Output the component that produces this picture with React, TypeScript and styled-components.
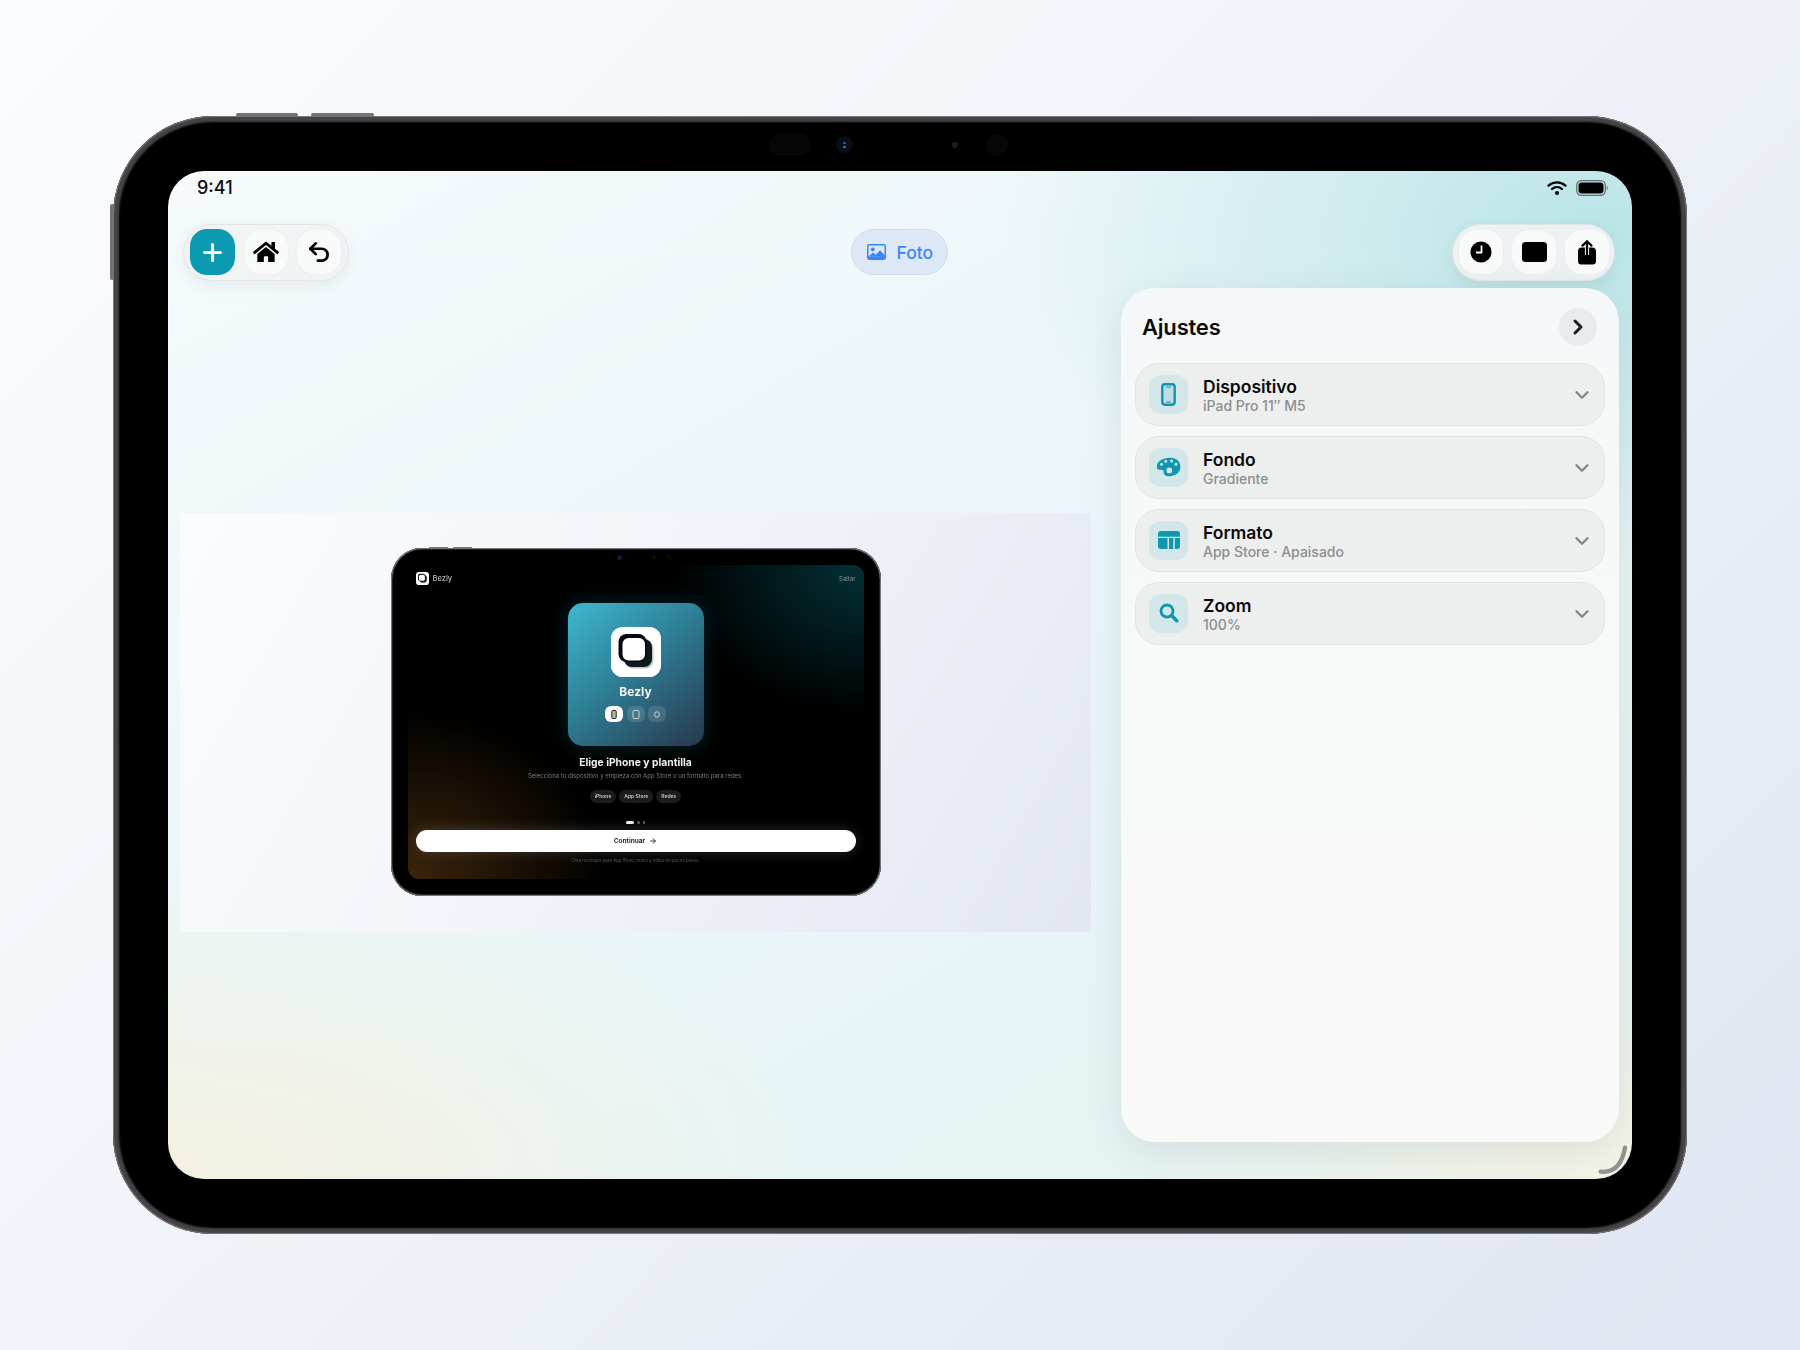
import React from "react";
import styled, { createGlobalStyle } from "styled-components";
import { FaHome } from "react-icons/fa";
import { Undo2, Plus, ChevronRight, ChevronDown, ArrowRight } from "lucide-react";

const Global = createGlobalStyle`
  html, body { margin: 0; padding: 0; }
  body { font-family: Inter, "Liberation Sans", sans-serif; background: #eef1f7; }
`;

const Page = styled.div`
  width: 1800px;
  height: 1350px;
  display: flex;
  align-items: center;
  justify-content: center;
  padding-bottom: 1px;
  box-sizing: border-box;
  background: linear-gradient(135deg, #fbfcfe 0%, #f0f3f8 45%, #dfe5f1 100%);
`;

const Device = styled.div`
  position: relative;
  box-sizing: border-box;
  width: 1574px;
  height: 1118px;
  padding: 55px;
  border-radius: 100px;
  background: #000;
  box-shadow: inset 0 0 0 1px #7a787b, inset 0 0 2px 6px #454346;
`;

const SideKey = styled.div<{ $left: number; $top: number; $w: number; $h: number }>`
  position: absolute;
  left: ${(p) => p.$left}px;
  top: ${(p) => p.$top}px;
  width: ${(p) => p.$w}px;
  height: ${(p) => p.$h}px;
  background: #747276;
  border-radius: 2px;
`;

const Sensor = styled.div<{ $left: number; $w: number; $h: number; $c: string }>`
  position: absolute;
  left: ${(p) => p.$left}px;
  top: ${(p) => 29 - p.$h / 2}px;
  width: ${(p) => p.$w}px;
  height: ${(p) => p.$h}px;
  background: ${(p) => p.$c};
  border-radius: ${(p) => p.$h / 2}px;
`;

const LensDot = styled.div`
  position: absolute;
  left: 730px;
  top: 26px;
  width: 3px;
  height: 7px;
  border-radius: 2px;
  background: repeating-linear-gradient(180deg, #2a62c9 0 2.5px, #0b1020 2.5px 4px);
`;

const Screen = styled.div`
  position: relative;
  width: 1464px;
  height: 1008px;
  border-radius: 36px;
  overflow: hidden;
  display: flex;
  flex-direction: column;
  background:
    radial-gradient(ellipse 600px 340px at 98% 6%, rgba(178, 225, 228, 0.85), rgba(178, 225, 228, 0) 100%),
    radial-gradient(ellipse 640px 300px at 0% 100%, rgba(246, 240, 222, 0.9), rgba(246, 240, 222, 0) 100%),
    radial-gradient(ellipse 520px 260px at 100% 100%, rgba(247, 244, 228, 0.9), rgba(247, 244, 228, 0) 100%),
    linear-gradient(150deg, #f6fafd 0%, #ebf6f8 38%, #e4f3f3 100%);
`;

const StatusBar = styled.div`
  height: 53px;
  flex: none;
  display: flex;
  align-items: flex-start;
  justify-content: space-between;
  padding: 6px 24px 0 29px;
  box-sizing: border-box;
`;

const Time = styled.span`
  font-size: 18px;
  line-height: 22px;
  font-weight: 500;
  color: #0c0c0c;
`;

const StatusIcons = styled.div`
  display: flex;
  align-items: center;
  gap: 9px;
  height: 22px;
`;

const TopBar = styled.div`
  flex: none;
  display: grid;
  grid-template-columns: 1fr auto 1fr;
  align-items: center;
  height: 57px;
  padding: 0 17px 0 15px;
`;

const ToolGroup = styled.div<{ $end?: boolean }>`
  justify-self: ${(p) => (p.$end ? "end" : "start")};
  display: flex;
  align-items: center;
  box-sizing: border-box;
  height: 57px;
  padding: 0 ${(p) => (p.$end ? 5 : 7)}px 0 6px;
  gap: 9px;
  border-radius: 29px;
  background: rgba(240, 242, 243, 0.92);
  border: 1px solid #e1e5e6;
  box-shadow: 0 5px 16px rgba(30, 50, 60, 0.07);
`;

const ToolButton = styled.button<{ $primary?: boolean }>`
  width: ${(p) => (p.$primary ? 45 : 44)}px;
  height: ${(p) => (p.$primary ? 46 : 44)}px;
  padding: 0;
  border: 0;
  border-radius: 17px;
  display: flex;
  align-items: center;
  justify-content: center;
  color: ${(p) => (p.$primary ? "#fff" : "#000")};
  background: ${(p) => (p.$primary ? "#0b9ab0" : "#f8f9f9")};
  box-shadow: ${(p) => (p.$primary ? "none" : "0 0 0 1px rgba(235,238,238,.7)")};
`;

const ModePill = styled.div`
  display: flex;
  align-items: center;
  gap: 11px;
  box-sizing: border-box;
  width: 97px;
  height: 46px;
  padding-left: 15px;
  border-radius: 23px;
  background: #dce8f6;
  border: 1px solid #cfdcea;
  color: #3b86f7;
  font-size: 17.5px;
  font-weight: 500;
`;

const Body = styled.div`
  flex: 1;
  min-height: 0;
  display: flex;
  align-items: center;
  gap: 30px;
  padding: 7px 13px 37px 12px;
`;

const Stage = styled.div`
  flex: none;
  width: 911px;
  height: 419px;
  margin-top: 15px;
  display: flex;
  align-items: center;
  justify-content: center;
  background: linear-gradient(120deg, #fbfcfe 0%, #f2f4f9 45%, #e3e7f1 100%);
`;

const MiniDevice = styled.div`
  position: relative;
  box-sizing: border-box;
  width: 490px;
  height: 348px;
  padding: 17px;
  border-radius: 31px;
  background: #000;
  box-shadow: inset 0 0 0 1px #77757a, inset 0 0 1px 1.5px #3d3b3e;
  filter: blur(0.35px);
`;

const MiniKey = styled.div<{ $left: number; $top: number; $w: number; $h: number }>`
  position: absolute;
  left: ${(p) => p.$left}px;
  top: ${(p) => p.$top}px;
  width: ${(p) => p.$w}px;
  height: ${(p) => p.$h}px;
  background: #77757a;
`;

const MiniSensor = styled.div<{ $left: number; $size: number; $c: string }>`
  position: absolute;
  left: ${(p) => p.$left}px;
  top: ${(p) => 9 - p.$size / 2}px;
  width: ${(p) => p.$size}px;
  height: ${(p) => p.$size}px;
  border-radius: 50%;
  background: ${(p) => p.$c};
`;

const MiniScreen = styled.div`
  box-sizing: border-box;
  width: 456px;
  height: 314px;
  border-radius: 11px;
  overflow: hidden;
  padding: 6px 8px 0;
  display: flex;
  flex-direction: column;
  align-items: center;
  background:
    radial-gradient(ellipse 190px 150px at 100% 0%, rgba(3, 54, 60, 0.9), rgba(3, 54, 60, 0) 100%),
    radial-gradient(ellipse 200px 170px at 0% 100%, rgba(66, 40, 12, 0.9), rgba(66, 40, 12, 0) 100%),
    #000;
`;

const MiniHeader = styled.div`
  align-self: stretch;
  height: 14px;
  display: flex;
  align-items: center;
  justify-content: space-between;
  color: #8e8e8e;
  font-size: 6px;
`;

const MiniBrand = styled.div`
  display: flex;
  align-items: center;
  gap: 4px;
  font-size: 7.5px;
  font-weight: 500;
  color: #b5b5b5;
`;

const AppCard = styled.div`
  margin-top: 18px;
  flex: none;
  box-sizing: border-box;
  width: 136px;
  height: 143px;
  padding-top: 24px;
  border-radius: 15px;
  display: flex;
  flex-direction: column;
  align-items: center;
  background: linear-gradient(140deg, #3db9d0 0%, #2f7f96 45%, #28374c 100%);
  box-shadow: 0 0 20px rgba(24, 130, 150, 0.3);
`;

const AppTile = styled.div`
  width: 50px;
  height: 50px;
  border-radius: 12px;
  background: #fff;
  display: flex;
`;

const AppName = styled.div`
  margin-top: 8px;
  height: 14px;
  line-height: 14px;
  font-size: 12px;
  font-weight: 700;
  color: #f2f6f7;
`;

const CardChips = styled.div`
  margin-top: 7px;
  display: flex;
  gap: 3.5px;
`;

const CardChip = styled.div<{ $on?: boolean }>`
  width: 18px;
  height: 16px;
  border-radius: 6px;
  display: flex;
  align-items: center;
  justify-content: center;
  background: ${(p) => (p.$on ? "#fff" : "rgba(255,255,255,.13)")};
  color: ${(p) => (p.$on ? "#222" : "#c8d3d8")};
`;

const MiniTitle = styled.div`
  margin-top: 9px;
  height: 14px;
  line-height: 14px;
  font-size: 10.3px;
  font-weight: 700;
  color: #f2f2f2;
`;

const MiniSub = styled.div`
  margin-top: 3px;
  height: 8px;
  line-height: 8px;
  font-size: 6px;
  color: #7c7c7c;
`;

const MiniTags = styled.div`
  margin-top: 10px;
  display: flex;
  gap: 3px;
`;

const MiniTag = styled.div`
  height: 13px;
  padding: 0 5px;
  border-radius: 7px;
  line-height: 13px;
  font-size: 5px;
  font-weight: 600;
  color: #c4c4c4;
  background: #1c1c1e;
`;

const Dots = styled.div`
  margin-top: 18px;
  height: 3px;
  display: flex;
  align-items: center;
  gap: 3px;
`;

const Dot = styled.div<{ $on?: boolean }>`
  width: ${(p) => (p.$on ? 8 : 2.5)}px;
  height: 2.5px;
  border-radius: 2px;
  background: ${(p) => (p.$on ? "#f0f0f0" : "#5a5a5a")};
`;

const Continue = styled.div`
  margin-top: 6px;
  flex: none;
  align-self: stretch;
  height: 22px;
  border-radius: 11px;
  display: flex;
  align-items: center;
  justify-content: center;
  gap: 4px;
  background: #fff;
  color: #2a2a2a;
  font-size: 6.5px;
  font-weight: 700;
  box-shadow: 0 0 14px rgba(255, 255, 255, 0.16);
`;

const MiniFoot = styled.div`
  margin-top: 6px;
  height: 6px;
  line-height: 6px;
  font-size: 4.4px;
  color: #5a5a5a;
`;

const Panel = styled.aside`
  flex: none;
  box-sizing: border-box;
  width: 498px;
  height: 854px;
  padding: 20px 14px;
  border-radius: 34px;
  display: flex;
  flex-direction: column;
  background: linear-gradient(180deg, #f5f8f8 0%, #f7f8f8 40%, #f9f9f8 100%);
  box-shadow: 0 10px 40px rgba(30, 50, 60, 0.1);
`;

const PanelHead = styled.div`
  height: 38px;
  display: flex;
  align-items: center;
  justify-content: space-between;
  padding: 0 8px 0 7px;
  margin-bottom: 17px;
`;

const PanelTitle = styled.h2`
  margin: 0;
  font-size: 22px;
  font-weight: 600;
  letter-spacing: -0.2px;
  color: #0b0b0b;
`;

const CloseButton = styled.button`
  width: 38px;
  height: 38px;
  padding: 0;
  border: 0;
  border-radius: 50%;
  display: flex;
  align-items: center;
  justify-content: center;
  background: #e9eaeb;
  color: #132029;
`;

const Rows = styled.div`
  display: flex;
  flex-direction: column;
  gap: 10px;
`;

const Row = styled.div`
  box-sizing: border-box;
  height: 63px;
  padding: 0 11px 0 13px;
  display: flex;
  align-items: center;
  gap: 15px;
  border-radius: 24px;
  background: #edeeee;
  border: 1px solid #e2e4e4;
`;

const RowIcon = styled.div`
  flex: none;
  width: 39px;
  height: 39px;
  border-radius: 12px;
  display: flex;
  align-items: center;
  justify-content: center;
  background: #d3e6ea;
  color: #0e97ae;
`;

const RowText = styled.div`
  flex: 1;
  padding-top: 1px;
  display: flex;
  flex-direction: column;
`;

const RowTitle = styled.div`
  font-size: 17.5px;
  line-height: 21px;
  font-weight: 600;
  color: #0b0b0b;
`;

const RowSub = styled.div`
  font-size: 14px;
  line-height: 17px;
  font-weight: 500;
  color: #8c8e90;
`;

const RowChevron = styled(ChevronDown)`
  margin-top: 2px;
  color: #848688;
`;

const HomeArc = styled.svg`
  position: absolute;
  right: 3px;
  bottom: 3px;
`;

const Wifi = () => (
  <svg width="20" height="16" viewBox="0 0 20 16" fill="none" stroke="#000" strokeLinecap="round">
    <path d="M1.5 5.6C6.3 1.2 13.7 1.2 18.5 5.6" strokeWidth="2.3" />
    <path d="M5 9c2.9-2.6 7.1-2.6 10 0" strokeWidth="2.3" />
    <circle cx="10" cy="13" r="2.1" fill="#000" stroke="none" />
  </svg>
);

const Battery = () => (
  <svg width="32" height="16" viewBox="0 0 32 16">
    <rect x="0.7" y="0.7" width="28.6" height="14.6" rx="4.6" fill="none" stroke="#5f6e70" strokeWidth="1.2" />
    <rect x="2.5" y="2.5" width="25" height="11" rx="3" fill="#000" />
    <path d="M30.6 5.5c1 .4 1.2 1.2 1.2 2.5s-.2 2.1-1.2 2.5z" fill="#7a8a8c" />
  </svg>
);

const ClockIcon = () => (
  <svg width="22" height="22" viewBox="0 0 22 22">
    <circle cx="11" cy="11" r="10.5" fill="#000" />
    <path d="M11.5 4.5V11.5H6" fill="none" stroke="#fff" strokeWidth="1.8" strokeLinejoin="round" />
  </svg>
);

const StopIcon = () => (
  <svg width="25" height="20" viewBox="0 0 25 20">
    <rect width="25" height="20" rx="3.5" fill="#000" />
  </svg>
);

const ShareIcon = () => (
  <svg width="20" height="25" viewBox="0 0 20 25">
    <path d="M5 7.5h10a4 4 0 0 1 4 4V21a3.5 3.5 0 0 1-3.5 3.5h-11A3.5 3.5 0 0 1 1 21v-9.5a4 4 0 0 1 4-4z" fill="#000" />
    <path d="M10 15V3" stroke="#f8f9f9" strokeWidth="4.2" />
    <path d="M10 16V2" stroke="#000" strokeWidth="2.2" strokeLinecap="round" />
    <path d="M5.5 5.6 10 1.2l4.5 4.4" fill="none" stroke="#000" strokeWidth="2.2" strokeLinecap="round" strokeLinejoin="round" />
  </svg>
);

const PhotoIcon = () => (
  <svg width="19" height="16" viewBox="0 0 19 16">
    <rect width="19" height="16" rx="2.4" fill="#3b86f7" />
    <rect x="1.5" y="1.5" width="16" height="11" rx="0.8" fill="#dce8f6" />
    <circle cx="5.8" cy="5.4" r="1.9" fill="#3b86f7" />
    <path d="M1.5 12.5 6 8.5l3 2.3 4-4.6 4.5 4.8v2z" fill="#3b86f7" />
  </svg>
);

const PhoneIcon = () => (
  <svg width="15" height="23" viewBox="0 0 15 23" fill="none">
    <rect x="1.3" y="1.3" width="12.4" height="20.4" rx="2.6" fill="#bcdde4" stroke="currentColor" strokeWidth="2.4" />
    <path d="M5.5 4h4M5.5 19h4" stroke="currentColor" strokeWidth="1.2" strokeLinecap="round" />
  </svg>
);

const PaletteIcon = () => (
  <svg width="25" height="20" viewBox="0 0 25 20">
    <path
      fillRule="evenodd"
      fill="currentColor"
      d="M14 .7C6.8.7.8 4.2.8 9.7c0 2.5 1.9 3.3 3.8 3 1.9-.3 3.2.4 3 2-.2 2.7 1.8 4.6 5.4 4.6 6.5 0 11.4-3.9 11.4-9.3S20.5.7 14 .7zM5.5 8.7a1.5 1.5 0 1 1 0-3 1.5 1.5 0 0 1 0 3zM9.8 5.7a1.5 1.5 0 1 1 0-3 1.5 1.5 0 0 1 0 3zM15.6 5.5a1.5 1.5 0 1 1 0-3 1.5 1.5 0 0 1 0 3zM20 8.7a1.5 1.5 0 1 1 0-3 1.5 1.5 0 0 1 0 3zM13.3 16.3a2.9 2.9 0 1 1 0-5.8 2.9 2.9 0 0 1 0 5.8z"
    />
  </svg>
);

const LayoutIcon = () => (
  <svg width="22" height="18" viewBox="0 0 22 18" fill="currentColor">
    <path d="M3 0h16a3 3 0 0 1 3 3v2.8H0V3a3 3 0 0 1 3-3z" />
    <path d="M0 7h9.5v11H3a3 3 0 0 1-3-3z" />
    <rect x="11" y="7" width="4.3" height="11" />
    <path d="M16.8 7H22v8a3 3 0 0 1-3 3h-2.2z" />
  </svg>
);

const SearchIcon = () => (
  <svg width="20" height="20" viewBox="0 0 20 20" fill="none" stroke="currentColor">
    <circle cx="8" cy="8" r="6" strokeWidth="2.8" />
    <path d="M12.8 12.8 17.8 17.8" strokeWidth="3.4" strokeLinecap="round" />
  </svg>
);

const BrandMark = ({ size }: { size: number }) => (
  <svg width={size} height={size} viewBox="0 0 50 50">
    <rect width="50" height="50" rx="12" fill="#fff" />
    <rect x="14" y="14" width="28.5" height="27.5" rx="8" fill="#c4c7ca" />
    <rect x="13" y="12" width="28" height="28" rx="8" fill="#0e1a22" />
    <rect x="7.5" y="7" width="28" height="28" rx="8" fill="#05090c" />
    <rect x="11.5" y="11" width="22.5" height="22.5" rx="6" fill="#fff" />
  </svg>
);

const ChipGlyph = ({ kind }: { kind: "phone" | "tablet" | "watch" }) => (
  <svg width="8" height="9" viewBox="0 0 8 9" fill="none" stroke="currentColor" strokeWidth="1">
    {kind === "phone" && <rect x="1.8" y="0.5" width="4.4" height="8" rx="1" fill="currentColor" fillOpacity=".35" />}
    {kind === "tablet" && <rect x="1" y="0.5" width="6" height="8" rx="1" />}
    {kind === "watch" && <rect x="1.8" y="1.8" width="4.4" height="5.4" rx="2" />}
  </svg>
);

const rows = [
  { title: "Dispositivo", sub: "iPad Pro 11″ M5", icon: <PhoneIcon /> },
  { title: "Fondo", sub: "Gradiente", icon: <PaletteIcon /> },
  { title: "Formato", sub: "App Store · Apaisado", icon: <LayoutIcon /> },
  { title: "Zoom", sub: "100%", icon: <SearchIcon /> },
];

export default function App() {
  return (
    <>
      <Global />
      <Page>
        <Device>
          <SideKey $left={123} $top={-3} $w={62} $h={4} />
          <SideKey $left={198} $top={-3} $w={63} $h={4} />
          <SideKey $left={-3} $top={88} $w={4} $h={76} />
          <Sensor $left={655} $w={43} $h={22} $c="#060606" />
          <Sensor $left={723} $w={17} $h={17} $c="#0a0d18" />
          <LensDot />
          <Sensor $left={839} $w={6} $h={6} $c="#1c1c1c" />
          <Sensor $left={873} $w={22} $h={22} $c="#070707" />
          <Screen>
            <StatusBar>
              <Time>9:41</Time>
              <StatusIcons>
                <Wifi />
                <Battery />
              </StatusIcons>
            </StatusBar>
            <TopBar>
              <ToolGroup>
                <ToolButton $primary aria-label="Añadir">
                  <Plus size={27} strokeWidth={2.8} />
                </ToolButton>
                <ToolButton aria-label="Inicio">
                  <FaHome size={26} />
                </ToolButton>
                <ToolButton aria-label="Deshacer">
                  <Undo2 size={26} strokeWidth={2.5} />
                </ToolButton>
              </ToolGroup>
              <ModePill>
                <PhotoIcon />
                Foto
              </ModePill>
              <ToolGroup $end>
                <ToolButton aria-label="Historial">
                  <ClockIcon />
                </ToolButton>
                <ToolButton aria-label="Detener">
                  <StopIcon />
                </ToolButton>
                <ToolButton aria-label="Compartir">
                  <ShareIcon />
                </ToolButton>
              </ToolGroup>
            </TopBar>
            <Body>
              <Stage>
                <MiniDevice>
                  <MiniKey $left={38} $top={-1} $w={19} $h={1.5} />
                  <MiniKey $left={62} $top={-1} $w={19} $h={1.5} />
                  <MiniSensor $left={226} $size={5} $c="#0d1a35" />
                  <MiniSensor $left={262} $size={2} $c="#222" />
                  <MiniSensor $left={275} $size={7} $c="#060606" />
                  <MiniScreen>
                    <MiniHeader>
                      <MiniBrand>
                        <BrandMark size={13} />
                        Bezly
                      </MiniBrand>
                      Saltar
                    </MiniHeader>
                    <AppCard>
                      <AppTile>
                        <BrandMark size={50} />
                      </AppTile>
                      <AppName>Bezly</AppName>
                      <CardChips>
                        <CardChip $on>
                          <ChipGlyph kind="phone" />
                        </CardChip>
                        <CardChip>
                          <ChipGlyph kind="tablet" />
                        </CardChip>
                        <CardChip>
                          <ChipGlyph kind="watch" />
                        </CardChip>
                      </CardChips>
                    </AppCard>
                    <MiniTitle>Elige iPhone y plantilla</MiniTitle>
                    <MiniSub>Selecciona tu dispositivo y empieza con App Store o un formato para redes.</MiniSub>
                    <MiniTags>
                      <MiniTag>iPhone</MiniTag>
                      <MiniTag>App Store</MiniTag>
                      <MiniTag>Redes</MiniTag>
                    </MiniTags>
                    <Dots>
                      <Dot $on />
                      <Dot />
                      <Dot />
                    </Dots>
                    <Continue>
                      Continuar
                      <ArrowRight size={8} strokeWidth={2.8} />
                    </Continue>
                    <MiniFoot>Crea mockups para App Store, redes y vídeo en pocos pasos.</MiniFoot>
                  </MiniScreen>
                </MiniDevice>
              </Stage>
              <Panel>
                <PanelHead>
                  <PanelTitle>Ajustes</PanelTitle>
                  <CloseButton aria-label="Cerrar">
                    <ChevronRight size={24} strokeWidth={3} />
                  </CloseButton>
                </PanelHead>
                <Rows>
                  {rows.map((r) => (
                    <Row key={r.title}>
                      <RowIcon>{r.icon}</RowIcon>
                      <RowText>
                        <RowTitle>{r.title}</RowTitle>
                        <RowSub>{r.sub}</RowSub>
                      </RowText>
                      <RowChevron size={22} strokeWidth={2.6} />
                    </Row>
                  ))}
                </Rows>
              </Panel>
            </Body>
            <HomeArc width="32" height="32" viewBox="0 0 32 32" fill="none">
              <path d="M28 3.7Q23.5 29.7 3.7 27.7" stroke="#919191" strokeWidth="4.3" strokeLinecap="round" />
            </HomeArc>
          </Screen>
        </Device>
      </Page>
    </>
  );
}
